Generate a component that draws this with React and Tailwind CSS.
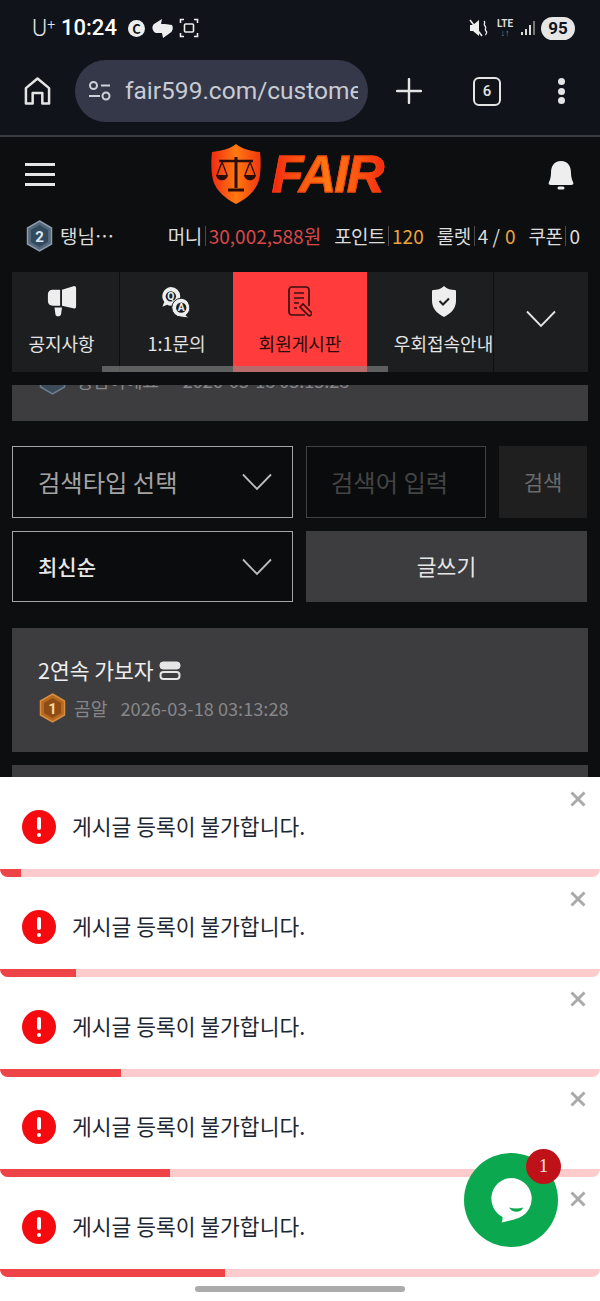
import React from "react";

const KR = "font-['Noto_Sans_CJK_KR','Noto_Sans',sans-serif]";

const TOAST_WIDTHS = ["w-[21px]", "w-[76px]", "w-[121px]", "w-[170px]", "w-[225px]"];

function Chevron({ className = "stroke-[#bdbdbd]" }) {
  return (
    <svg width="30" height="18" viewBox="0 0 30 18" fill="none" className={className}>
      <path d="M1 1.500 15 16 29 1.500" strokeWidth="1.800" />
    </svg>
  );
}

function StatusBar() {
  return (
    <div className="h-[60px] flex items-center pl-[32px] pr-[25px] pb-[4px] text-white">
      <span className="text-[23px] font-light leading-none text-[#e8e8e8] font-['Roboto',sans-serif]">
        U<sup className="text-[14px] -top-[7px]">+</sup>
      </span>
      <span className="ml-[6px] text-[22px] font-medium leading-none font-['Roboto',sans-serif]">10:24</span>
      <span className="ml-[11px] w-[17px] h-[17px] rounded-full bg-[#eee] text-[#11131a] text-[13px] font-bold flex items-center justify-center leading-none">C</span>
      <svg width="23" height="21" viewBox="0 0 23 21" className="ml-[6px] fill-[#eee]">
        <path d="M11 1 3 6a5.500 5.500 0 0 0 2 9h6l1 5 7-5a6 6 0 0 0 2-8l-7-1h-4z" />
      </svg>
      <svg width="20" height="20" viewBox="0 0 20 20" fill="none" className="ml-[5px] stroke-[#eee]">
        <path d="M1.500 5V1.500H5M15 1.500h3.500V5M18.500 15v3.500H15M5 18.500H1.500V15" strokeWidth="1.600" />
        <rect x="5.500" y="6" width="9" height="8" rx="1" strokeWidth="1.600" />
      </svg>
      <div className="ml-auto flex items-center">
        <svg width="19" height="20" viewBox="0 0 19 20" className="fill-[#eee] stroke-[#eee]">
          <path d="M1 7h3l6-5v16l-6-5H1z" stroke="none" />
          <path d="M1 2l12 16" strokeWidth="1.500" />
          <path d="M15 3c2 2-1 3 1 5s-1 3 1 5-1 3 0 4" fill="none" strokeWidth="1.300" />
        </svg>
        <div className="ml-[8px] flex flex-col items-center w-[18px]">
          <span className="text-[10px] font-bold leading-[10px] text-[#ddd] font-['Roboto',sans-serif]">LTE</span>
          <span className="text-[9px] leading-[8px] text-[#888] font-['Roboto',sans-serif]">↓↑</span>
        </div>
        <div className="ml-[7px] flex items-end gap-[2px] h-[14px]">
          <span className="w-[2px] h-[3px] bg-[#ddd]" />
          <span className="w-[2px] h-[6px] bg-[#ddd]" />
          <span className="w-[2px] h-[10px] bg-[#ddd]" />
          <span className="w-[2px] h-[14px] bg-[#777]" />
        </div>
        <span className="ml-[6px] w-[34px] h-[23px] rounded-full bg-[#e6e6e6] text-[#11131a] text-[17px] font-bold leading-none flex items-center justify-center font-['Roboto',sans-serif]">95</span>
      </div>
    </div>
  );
}

function BrowserBar() {
  return (
    <div className="h-[77px] border-b-2 border-[#3b3c40] flex items-start relative">
      <svg width="27" height="30" viewBox="0 0 28 30" fill="none" className="ml-[24px] mt-[16px] stroke-[#e4e4e4]">
        <path d="M2 28V12L14 2l12 10v16h-7V17H9v11z" strokeWidth="2.600" strokeLinejoin="round" />
      </svg>
      <div className="ml-[24px] w-[293px] h-[62px] rounded-full bg-[#343849] flex items-center pl-[13px] pr-[10px]">
        <svg width="24" height="22" viewBox="0 0 24 22" fill="none" className="shrink-0 stroke-[#cfd1d8]">
          <circle cx="5.500" cy="5.500" r="3.500" strokeWidth="2" />
          <path d="M13 5.500h9M1 16h11" strokeWidth="2" />
          <circle cx="18" cy="16" r="3.500" strokeWidth="2" />
        </svg>
        <span className="ml-[13px] pt-[1px] text-[24.500px] leading-none text-[#c9cbd3] whitespace-nowrap overflow-hidden font-['Roboto',sans-serif]">fair599.com/custome</span>
      </div>
      <svg width="26" height="26" viewBox="0 0 26 26" className="ml-[28px] mt-[18px] stroke-[#e4e4e4]">
        <path d="M13 1v24M1 13h24" strokeWidth="2.400" strokeLinecap="round" />
      </svg>
      <div className="ml-[51px] mt-[17px] w-[28px] h-[29px] rounded-[6px] border-[2.500px] border-[#e4e4e4] flex items-center justify-center text-[#e4e4e4] text-[15px] font-medium font-['Roboto',sans-serif]">6</div>
      <div className="ml-[57px] mt-[18px] flex flex-col gap-[2.500px]">
        <span className="w-[7px] h-[7px] rounded-full bg-[#e4e4e4]" />
        <span className="w-[7px] h-[7px] rounded-full bg-[#e4e4e4]" />
        <span className="w-[7px] h-[7px] rounded-full bg-[#e4e4e4]" />
      </div>
    </div>
  );
}

function Logo() {
  return (
    <div className="flex items-center">
      <svg width="50" height="60" viewBox="0 0 50 60">
        <defs>
          <linearGradient id="shield" x1="0" y1="0" x2="1" y2="0">
            <stop offset="0" stopColor="#f22a12" />
            <stop offset="0.5" stopColor="#ff7a10" />
            <stop offset="1" stopColor="#f2360f" />
          </linearGradient>
        </defs>
        <path d="M25 0C31 5 40 7 49 8c1 8 1 20-1 28-3 11-13 19-23 24C15 55 5 47 2 36 0 28 0 16 1 8 10 7 19 5 25 0z" fill="url(#shield)" />
        <g stroke="#2a0d08" fill="none" strokeWidth="2">
          <path d="M25 13v31" strokeWidth="3" />
          <path d="M17 46h16" strokeWidth="3" />
          <path d="M8 17h34" strokeWidth="2.500" />
          <path d="M11 18 6 31M11 18l5 13M39 18l-5 13M39 18l5 13" strokeWidth="1.300" />
        </g>
        <path d="M5 31h12c-1 7-11 7-12 0zM33 31h12c-1 7-11 7-12 0z" fill="#2a0d08" />
      </svg>
      <span className="ml-[11px] text-[52px] leading-none font-bold italic tracking-[-2px] bg-linear-to-r from-[#f5200f] via-[#ff7a12] to-[#f5200f] bg-clip-text text-transparent [-webkit-text-stroke:1px_#f2400f] font-['Liberation_Sans',sans-serif] pr-[4px]">FAIR</span>
    </div>
  );
}

function SiteHeader() {
  return (
    <div className="h-[68px] flex items-center relative px-[25px]">
      <div className="flex flex-col gap-[7px] mt-[6px]">
        <span className="w-[30px] h-[3px] bg-[#e6e6e6]" />
        <span className="w-[30px] h-[3px] bg-[#e6e6e6]" />
        <span className="w-[30px] h-[3px] bg-[#e6e6e6]" />
      </div>
      <div className="mx-auto mt-[5px] -translate-x-[3px]">
        <Logo />
      </div>
      <svg width="26" height="30" viewBox="0 0 26 30" className="fill-[#eee] mt-[7px] mr-[1px]">
        <path d="M13 1c7 0 10 5 10 12 0 4 1 7 2 9 1 2 0 3-2 3H3c-2 0-3-1-2-3 1-2 2-5 2-9C3 6 6 1 13 1z" />
        <rect x="9.500" y="26.500" width="7" height="3" rx="1.500" />
      </svg>
    </div>
  );
}

function Divider() {
  return <span className="inline-block w-px h-[20px] bg-[#4a4a4a] mx-[3px] align-[-3px]" />;
}

function InfoRow() {
  return (
    <div className="h-[67px] flex items-center pl-[26px] pr-[20px] pb-[5px] text-[19px] text-[#dcdcdc] whitespace-nowrap">
      <svg width="27" height="32" viewBox="0 0 27 32">
        <path d="M13.500 1 25.500 8v16l-12 7-12-7V8z" fill="#55677a" stroke="#8b9cac" strokeWidth="1.500" />
        <path d="M13.500 5 22 10v12l-8.500 5L5 22V10z" fill="#33495e" />
        <text x="13.500" y="21.500" textAnchor="middle" fontSize="15" fontWeight="700" fill="#dfe6ee" fontFamily="Roboto, sans-serif">2</text>
      </svg>
      <span className="ml-[7px]">탱님…</span>
      <div className="ml-auto flex items-center">
        <span className="tracking-[-0.500px]">머니</span>
        <Divider />
        <span className="text-[#d9484a]">30,002,588원</span>
        <span className="ml-[13px] tracking-[-0.500px]">포인트</span>
        <Divider />
        <span className="text-[#eda23c]">120</span>
        <span className="ml-[13px] tracking-[-0.500px]">룰렛</span>
        <Divider />
        <span>4 / </span>
        <span className="ml-[5px] text-[#eda23c]">0</span>
        <span className="ml-[13px] tracking-[-0.500px]">쿠폰</span>
        <Divider />
        <span>0</span>
      </div>
    </div>
  );
}

function MegaphoneIcon() {
  return (
    <svg width="30" height="31" viewBox="0 0 30 33" className="fill-[#eeeeee]">
      <path d="M0 9c0-3 2-5 5-5h8v17H5c-3 0-5-2-5-5zM15 4l13-4c1 0 2 1 2 2v20c0 1-1 2-2 2l-13-3z" />
      <path d="M7 23h8l-1 7c-.5 3-6 3-6 0z" />
    </svg>
  );
}

function QnaIcon() {
  return (
    <svg width="31" height="32" viewBox="0 0 32 34">
      <path d="M10 1a10 10 0 0 1 0 20 10 10 0 0 1-4-1l-5 2 2-5A10 10 0 0 1 10 1z" fill="#eee" />
      <circle cx="10" cy="11" r="5.500" fill="#1d1e20" />
      <text x="10" y="15" textAnchor="middle" fontSize="11" fontWeight="700" fill="#eee" fontFamily="Roboto, sans-serif">Q</text>
      <path d="M21 13a10 10 0 0 1 5 18l3 3-8-1a10 10 0 0 1 0-20z" fill="#eee" stroke="#1d1e20" />
      <circle cx="21" cy="23" r="5.500" fill="#1d1e20" />
      <text x="21" y="27" textAnchor="middle" fontSize="11" fontWeight="700" fill="#eee" fontFamily="Roboto, sans-serif">A</text>
    </svg>
  );
}

function BoardIcon() {
  return (
    <svg width="24" height="31" viewBox="0 0 24 31" fill="none" stroke="#3a1010" strokeWidth="1.700">
      <path d="M17 29H4a3 3 0 0 1-3-3V4a3 3 0 0 1 3-3h14a3 3 0 0 1 3 3v16" />
      <path d="M6 7h10M6 12h10M6 17h5M6 22h3" />
      <path d="M12 21l3-3 8 8c1 1 1 2 0 3s-2 1-3 0z" />
    </svg>
  );
}

function ShieldIcon() {
  return (
    <svg width="24" height="31" viewBox="0 0 24 31">
      <path d="M12 0c3 3 7 4 11 4 1 0 1 1 1 2v9c0 8-6 13-12 16C6 28 0 23 0 15V6c0-1 0-2 1-2 4 0 8-1 11-4z" fill="#eee" />
      <path d="M7.500 15l3.500 3.500 6-6" fill="none" stroke="#1d1e20" strokeWidth="2" />
    </svg>
  );
}

const TABS = [
  { label: "공지사항", icon: <MegaphoneIcon />, cls: "w-[108px] pr-[8px] border-r border-[#0d0e10]" },
  { label: "1:1문의", icon: <QnaIcon />, cls: "w-[113px] text-[18.500px]" },
  { label: "회원게시판", icon: <BoardIcon />, cls: "w-[134px] bg-[#ff3b3c] !text-[#2c0b0b]" },
  { label: "우회접속안내", icon: <ShieldIcon />, cls: "w-[127px] pl-[27px] border-r border-[#0d0e10] overflow-hidden" },
];

function TabBar() {
  return (
    <div className="mx-[12px] h-[100px] bg-[#1d1e20] flex relative">
      {TABS.map(t => (
        <div key={t.label} className={"flex flex-col items-center pt-[13px] text-[18px] text-[#e4e4e4] whitespace-nowrap " + t.cls}>
          <div className="h-[33px] flex items-center">{t.icon}</div>
          <span className="mt-[12px] leading-[26px]">{t.label}</span>
        </div>
      ))}
      <div className="flex-1 flex items-center justify-center pb-[6px]">
        <Chevron className="stroke-[#e6e6e6]" />
      </div>
      <div className="absolute left-[90px] bottom-0 w-[286px] h-[6px] bg-[#8a8a8a]/60" />
    </div>
  );
}

// previous post, scrolled away under the tab bar: only the foot of its meta row shows
function ScrolledPost() {
  return (
    <div className="mx-[12px] mt-[13px] h-[36px] bg-[#3d3d3f] overflow-hidden pl-[27px]">
      <div className="-mt-[20px] flex items-center text-[18px] leading-[26px] text-[#87878a]">
        <svg width="27" height="30" viewBox="0 0 27 30" className="shrink-0">
          <path d="M13.500 1 25.500 8v14l-12 7-12-7V8z" fill="#3d4a58" stroke="#6b7d90" strokeWidth="1.500" />
        </svg>
        <span className="ml-[10px]">탱님이에요</span>
        <span className="ml-[24px]">2026-03-18 03:13:28</span>
      </div>
    </div>
  );
}

function SelectBox({ label, cls, rowCls }) {
  return (
    <div className={"w-[281px] border border-[#a5a5a5] bg-[#0b0c0e] flex items-center justify-between pl-[25px] pr-[20px] " + rowCls}>
      <span className={cls}>{label}</span>
      <Chevron />
    </div>
  );
}

function SearchArea() {
  return (
    <div className="mx-[12px] mt-[25px] grid grid-cols-[281px_180px_88px] gap-x-[13px] gap-y-[13px]">
      <SelectBox label="검색타입 선택" cls="text-[24.300px] text-[#a3a3a3]" rowCls="h-[72px]" />
      <div className="h-[72px] border border-[#434343] bg-[#0a0b0d] flex items-center pl-[24px] text-[24.300px] text-[#444444]">검색어 입력</div>
      <div className="h-[72px] bg-[#1f1f20] flex items-center justify-center text-[21px] text-[#6b6b6b]">검색</div>
      <SelectBox label="최신순" cls="text-[21px] text-[#e8e8e8] font-medium" rowCls="h-[71px]" />
      <div className="col-span-2 h-[71px] bg-[#3d3d3f] flex items-center justify-center text-[21.500px] text-[#e6e6e6]">글쓰기</div>
    </div>
  );
}

function PostCard() {
  return (
    <div className="mx-[12px] mt-[26px] h-[124px] bg-[#3d3d3f] pl-[26px] pt-[27px]">
      <div className="flex items-center text-[21.500px] leading-[30px] text-[#eeeeee]">
        <span>2연속 가보자</span>
        <svg width="22" height="19" viewBox="0 0 22 19" fill="none" className="ml-[5px] stroke-[#e6e6e6]">
          <rect x="1" y="1" width="20" height="7" rx="3" fill="#e6e6e6" />
          <rect x="1.500" y="11" width="19" height="7" rx="3" strokeWidth="2" />
        </svg>
      </div>
      <div className="mt-[8px] flex items-center text-[18.200px] leading-[26px] text-[#87878a]">
        <svg width="27" height="30" viewBox="0 0 27 30" className="shrink-0 ml-[1px]">
          <path d="M13.500 1 25.500 8v14l-12 7-12-7V8z" fill="#b8681f" stroke="#d98f3f" strokeWidth="1.500" />
          <path d="M13.500 5 22 10v10l-8.500 5L5 20V10z" fill="#8f4d15" />
          <text x="13.500" y="20.500" textAnchor="middle" fontSize="15" fontWeight="700" fill="#f3d7a8" fontFamily="Roboto, sans-serif">1</text>
        </svg>
        <span className="ml-[8px]">곰알</span>
        <span className="ml-[13px]">2026-03-18 03:13:28</span>
      </div>
    </div>
  );
}

function Toast({ width }) {
  return (
    <div className="h-[100px] bg-white relative flex flex-col">
      <div className="flex-1 flex items-center pl-[22px] pt-[7px]">
        <div className="w-[34px] h-[34px] rounded-full bg-[#f50a0f] flex flex-col items-center justify-center gap-[3px]">
          <span className="w-[4px] h-[13px] rounded-full bg-white" />
          <span className="w-[4px] h-[4px] rounded-full bg-white" />
        </div>
        <span className="ml-[16px] -mt-[2px] text-[21.500px] leading-none text-[#1d2733]">게시글 등록이 불가합니다.</span>
      </div>
      <svg width="16" height="16" viewBox="0 0 16 16" className="absolute right-[14px] top-[14px] stroke-[#aaaaaa]">
        <path d="M1.500 1.500l13 13M14.500 1.500l-13 13" strokeWidth="3" />
      </svg>
      <div className="h-[8px] bg-[#fdcbcb] rounded-b-[8px] overflow-hidden">
        <div className={"h-full bg-[#ee4347] " + width} />
      </div>
    </div>
  );
}

function ChatButton() {
  return (
    <div className="absolute left-[464px] top-[1153px] w-[94px] h-[94px] rounded-full bg-[#0ca84f] flex items-center justify-center">
      <svg width="44" height="47" viewBox="0 0 46 50">
        <path d="M23 1a22 22 0 0 1 8 42.500c-6 2-11 3.500-18 5 1-2 1-4 1-6A22 22 0 0 1 23 1z" fill="#fff" />
        <path d="M21 32.500c5 1.500 10 1.500 15 0-2 6-12 6-15 0z" fill="#0ca84f" />
      </svg>
      <div className="absolute left-[62px] -top-[4px] w-[35px] h-[35px] rounded-full bg-[#bf1118] flex items-center justify-center text-[19px] text-[#f5e5e5] font-['Liberation_Serif',serif]">1</div>
    </div>
  );
}

export default function App() {
  return (
    <div className={"relative w-[600px] h-[1301px] overflow-hidden bg-[#0d0e10] " + KR}>
      <div className="bg-[#11131a]">
        <StatusBar />
        <BrowserBar />
      </div>
      <SiteHeader />
      <InfoRow />
      <TabBar />
      <ScrolledPost />
      <SearchArea />
      <PostCard />
      <div className="mx-[12px] mt-[13px] h-[40px] bg-[#3d3d3f]" />

      <div className="absolute left-0 right-0 top-[777px] bottom-0 bg-white">
        {TOAST_WIDTHS.map(w => (
          <Toast key={w} width={w} />
        ))}
        <div className="mx-auto mt-[9px] w-[210px] h-[6px] rounded-full bg-[#ababab]" />
      </div>
      <ChatButton />
    </div>
  );
}
